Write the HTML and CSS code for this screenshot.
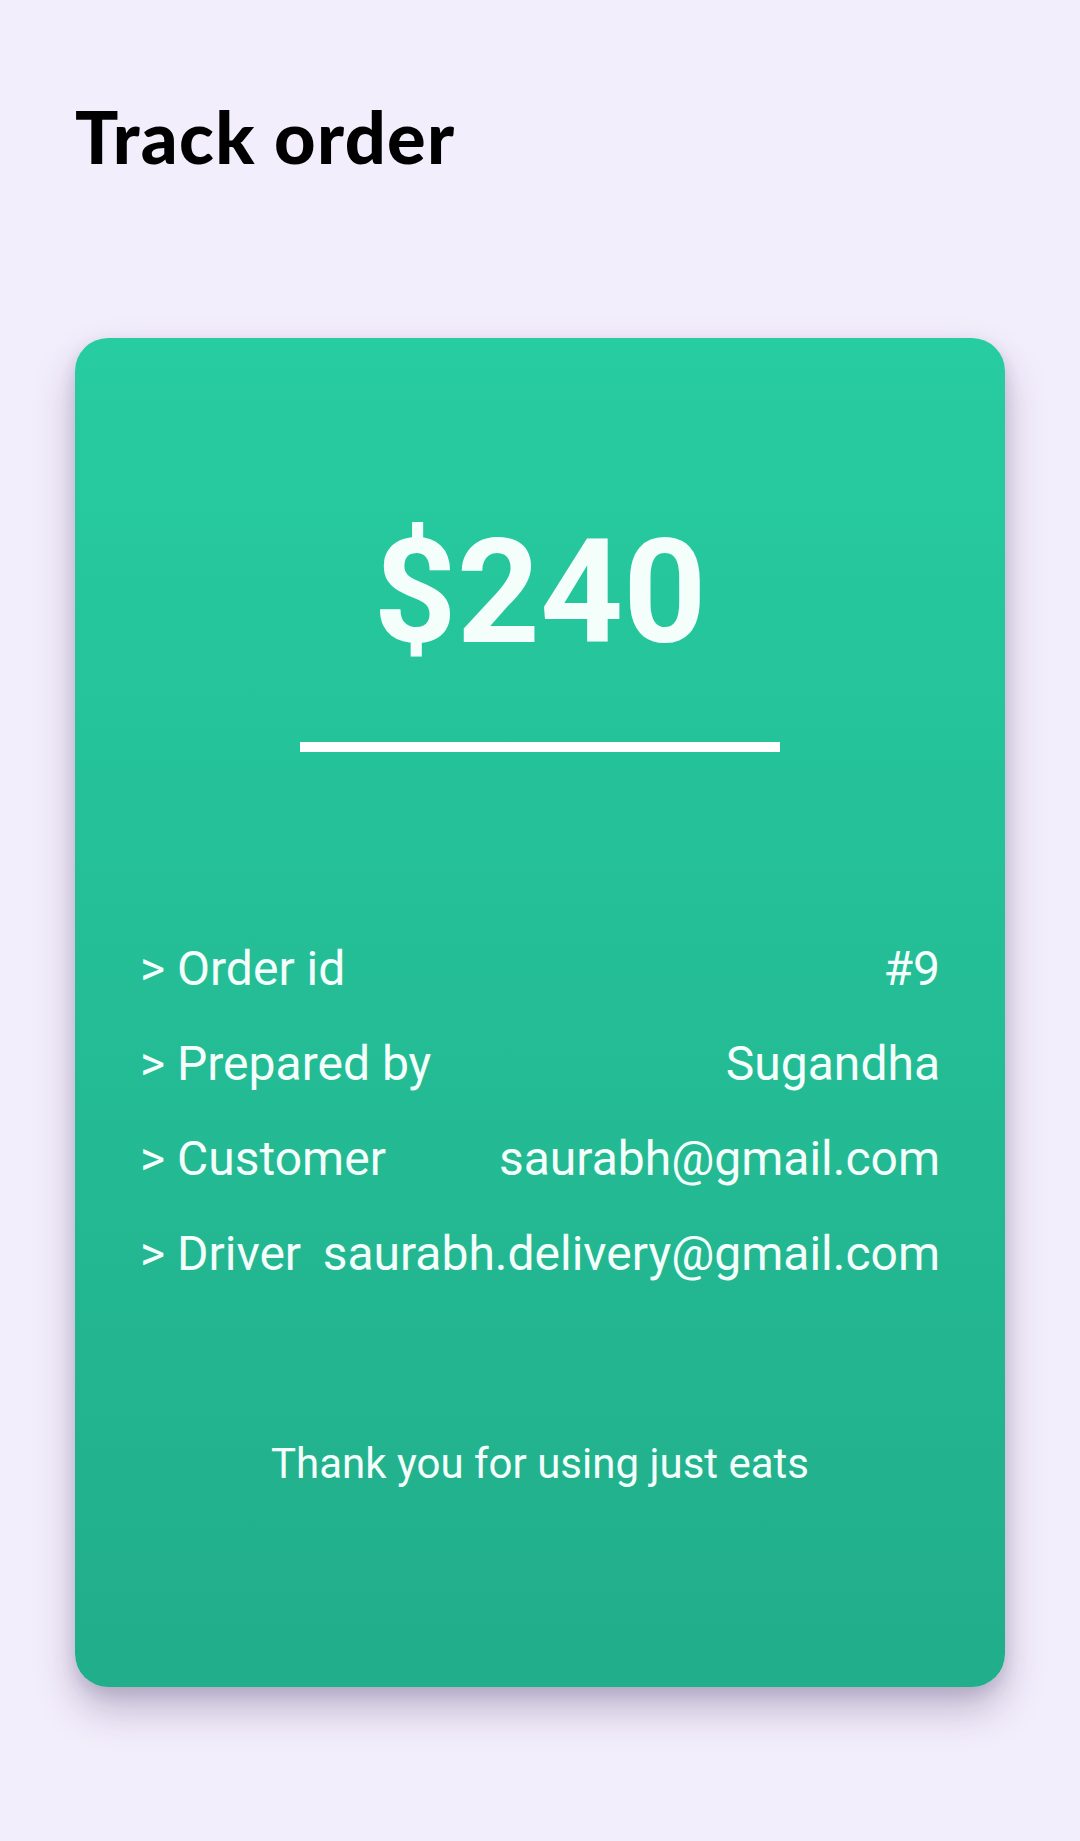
FILE: index.html
```html
<!DOCTYPE html>
<html lang="en">
<head>
<meta charset="utf-8">
<title>Track order</title>
<link rel="stylesheet" href="styles.css">
</head>
<body>
<main class="page">
  <h1 class="title">Track order</h1>
  <section class="card">
    <div class="amount">$240</div>
    <div class="rule"></div>
    <ul class="rows">
      <li class="row"><span class="label">&gt; Order id</span><span class="value">#9</span></li>
      <li class="row"><span class="label">&gt; Prepared by</span><span class="value">Sugandha</span></li>
      <li class="row"><span class="label">&gt; Customer</span><span class="value">saurabh@gmail.com</span></li>
      <li class="row"><span class="label">&gt; Driver</span><span class="value">saurabh.delivery@gmail.com</span></li>
    </ul>
    <p class="thanks">Thank you for using just eats</p>
  </section>
</main>
</body>
</html>
```
FILE: styles.css
```css
* { box-sizing: border-box; }
html, body { margin: 0; padding: 0; }
body {
  background: #f3eefc;
  font-family: Roboto, "Noto Sans", sans-serif;
}
.page {
  padding: 0 75px 154px;
}
.title {
  margin: 0;
  padding-top: 93px;
  font-family: Lato, "Open Sans", sans-serif;
  font-weight: 900;
  font-size: 72px;
  letter-spacing: 1.3px;
  line-height: 86px;
  color: #000;
}
.card {
  margin-top: 159px;
  height: 1349px;
  border-radius: 33px;
  background: linear-gradient(180deg, #27cca0 0%, #21ae8a 100%);
  box-shadow: 0 22px 40px rgba(40, 20, 70, 0.26), 0 6px 16px rgba(40, 20, 70, 0.12);
  padding: 0 65px;
  display: flex;
  flex-direction: column;
  color: #f4fffc;
}
.amount {
  margin-top: 182px;
  text-align: center;
  font-weight: 700;
  font-size: 145px;
  line-height: 145px;
}
.rule {
  margin: 77px auto 0;
  width: 480px;
  height: 10px;
  background: #fff;
}
.rows {
  list-style: none;
  margin: 169px 0 0;
  padding: 0;
}
.row {
  display: flex;
  justify-content: space-between;
  gap: 20px;
  font-size: 48px;
  line-height: 95px;
  white-space: nowrap;
}
.thanks {
  margin: 138px 0 0;
  text-align: center;
  font-size: 42px;
  line-height: 50px;
}
```
